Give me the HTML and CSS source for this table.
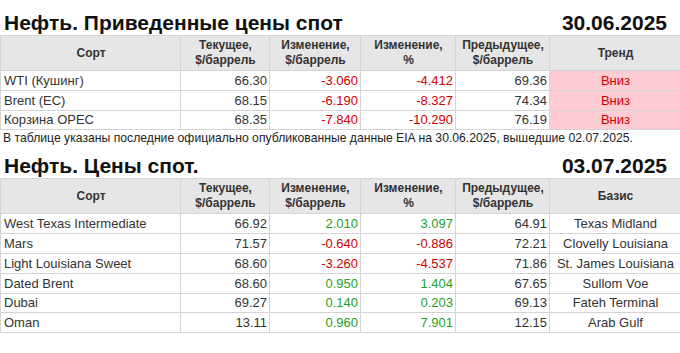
FILE: index.html
```html
<!DOCTYPE html>
<html lang="ru">
<head>
<meta charset="utf-8">
<link rel="stylesheet" href="styles.css">
</head>
<body>
<div class="page">
  <div class="title-row first">
    <h2 class="title">Нефть. Приведенные цены спот</h2>
    <span class="date">30.06.2025</span>
  </div>
  <table class="prices">
    <colgroup>
      <col class="c1"><col class="c2"><col class="c3"><col class="c4"><col class="c5"><col class="c6">
    </colgroup>
    <thead>
      <tr><th>Сорт</th><th>Текущее,<br>$/баррель</th><th>Изменение,<br>$/баррель</th><th>Изменение,<br>%</th><th>Предыдущее,<br>$/баррель</th><th>Тренд</th></tr>
    </thead>
    <tbody>
      <tr><td>WTI (Кушинг)</td><td class="num">66.30</td><td class="num neg">-3.060</td><td class="num neg">-4.412</td><td class="num">69.36</td><td class="trend">Вниз</td></tr>
      <tr><td>Brent (ЕС)</td><td class="num">68.15</td><td class="num neg">-6.190</td><td class="num neg">-8.327</td><td class="num">74.34</td><td class="trend">Вниз</td></tr>
      <tr><td>Корзина OPEC</td><td class="num">68.35</td><td class="num neg">-7.840</td><td class="num neg">-10.290</td><td class="num">76.19</td><td class="trend">Вниз</td></tr>
    </tbody>
  </table>
  <p class="note">В таблице указаны последние официально опубликованные данные EIA на 30.06.2025, вышедшие 02.07.2025.</p>
  <div class="title-row">
    <h2 class="title">Нефть. Цены спот.</h2>
    <span class="date">03.07.2025</span>
  </div>
  <table class="prices">
    <colgroup>
      <col class="c1"><col class="c2"><col class="c3"><col class="c4"><col class="c5"><col class="c6">
    </colgroup>
    <thead>
      <tr><th>Сорт</th><th>Текущее,<br>$/баррель</th><th>Изменение,<br>$/баррель</th><th>Изменение,<br>%</th><th>Предыдущее,<br>$/баррель</th><th>Базис</th></tr>
    </thead>
    <tbody>
      <tr><td>West Texas Intermediate</td><td class="num">66.92</td><td class="num pos">2.010</td><td class="num pos">3.097</td><td class="num">64.91</td><td class="center">Texas Midland</td></tr>
      <tr><td>Mars</td><td class="num">71.57</td><td class="num neg">-0.640</td><td class="num neg">-0.886</td><td class="num">72.21</td><td class="center">Clovelly Louisiana</td></tr>
      <tr><td>Light Louisiana Sweet</td><td class="num">68.60</td><td class="num neg">-3.260</td><td class="num neg">-4.537</td><td class="num">71.86</td><td class="center">St. James Louisiana</td></tr>
      <tr><td>Dated Brent</td><td class="num">68.60</td><td class="num pos">0.950</td><td class="num pos">1.404</td><td class="num">67.65</td><td class="center">Sullom Voe</td></tr>
      <tr><td>Dubai</td><td class="num">69.27</td><td class="num pos">0.140</td><td class="num pos">0.203</td><td class="num">69.13</td><td class="center">Fateh Terminal</td></tr>
      <tr><td>Oman</td><td class="num">13.11</td><td class="num pos">0.960</td><td class="num pos">7.901</td><td class="num">12.15</td><td class="center">Arab Gulf</td></tr>
    </tbody>
  </table>
</div>
</body>
</html>
```

FILE: styles.css
```css
html, body {
  margin: 0;
  padding: 0;
  background: #ffffff;
}

body {
  font-family: "Liberation Sans", Arial, sans-serif;
  color: #333333;
}

.page {
  width: 680px;
}

.title-row {
  display: flex;
  justify-content: space-between;
  align-items: baseline;
  padding: 0 13px 0 4px;
  height: 24px;
}

.title-row.first {
  margin-top: 11px;
}

.title {
  margin: 0;
  font-size: 21px;
  line-height: 24px;
  font-weight: bold;
  color: #111111;
}

.date {
  font-size: 21px;
  line-height: 24px;
  font-weight: bold;
  color: #111111;
}

.prices {
  width: 680px;
  border-collapse: collapse;
  table-layout: fixed;
  font-size: 13px;
}

.c1 { width: 180px; }
.c2 { width: 89px; }
.c3 { width: 91px; }
.c4 { width: 95px; }
.c5 { width: 94px; }
.c6 { width: 131px; }

.prices th,
.prices td {
  border: 1px solid #d4d4d4;
  padding: 0 2px 0 3px;
  white-space: nowrap;
  overflow: hidden;
}

.prices th {
  background: #e6e6e6;
  font-size: 12px;
  line-height: 15px;
  height: 34px;
  font-weight: bold;
  text-align: center;
  color: #333333;
}

.prices td {
  height: 18.8px;
  line-height: 15px;
  color: #333333;
}

.prices td.num {
  text-align: right;
}

.prices td.neg {
  color: #d00000;
}

.prices td.pos {
  color: #1f9f1f;
}

.prices td.center {
  text-align: center;
}

.prices td.trend {
  background: #ffccd4;
  color: #cc0000;
  text-align: center;
}

.note {
  margin: 1px 0 9px 3px;
  font-size: 12.2px;
  line-height: 14px;
  color: #222222;
}
```
